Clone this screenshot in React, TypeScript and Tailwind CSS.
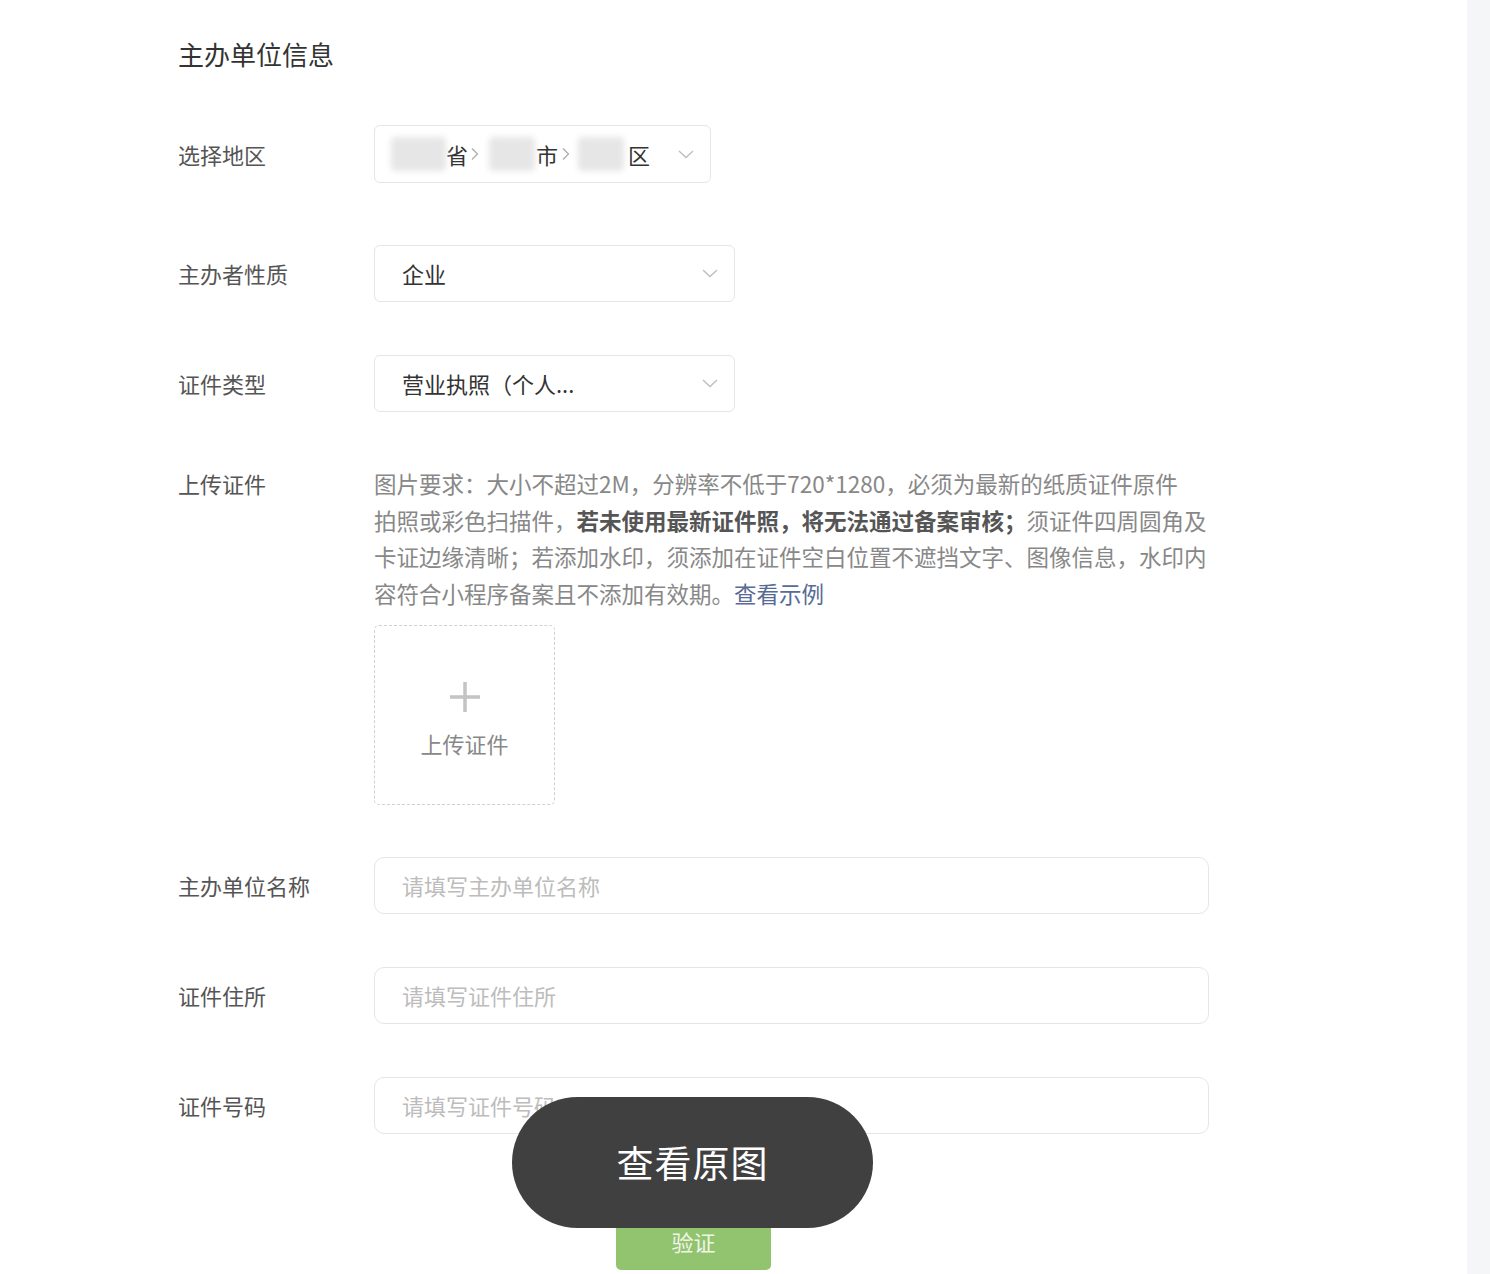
import type { ReactNode } from 'react'

const font = { fontFamily: '"Noto Sans CJK SC", "Noto Sans", sans-serif' }

function ChevronDown() {
  return (
    <svg width="16" height="9" viewBox="0 0 16 9" fill="none" className="shrink-0">
      <path d="M1 1 L8 7.5 L15 1" stroke="#bdbdbd" strokeWidth="1.3" />
    </svg>
  )
}

function Crumb() {
  return (
    <svg width="8" height="14" viewBox="0 0 8 14" fill="none" className="shrink-0">
      <path d="M1 1.5 L6.5 7 L1 12.5" stroke="#aaaaaa" strokeWidth="1.2" />
    </svg>
  )
}

function Blurred({ w }: { w: number }) {
  return <span className="h-[34px] bg-[#e6e6e6] blur-[3px] rounded-sm shrink-0" style={{ width: w }} />
}

function Row({ label, children, top = false }: { label: string; children: ReactNode; top?: boolean }) {
  return (
    <div className={top ? 'flex items-start' : 'flex items-center'}>
      <div className={top ? 'w-[196px] shrink-0 text-[22px] leading-[36.5px] text-[#555]' : 'w-[196px] shrink-0 text-[22px] text-[#555]'}>
        {label}
      </div>
      {children}
    </div>
  )
}

function Select({ value, width }: { value: string; width: string }) {
  return (
    <div className={`${width} h-[57px] flex items-center justify-between pl-[27px] pr-[16px] border border-[#e6e6e6] rounded-[6px] bg-white`}>
      <span className="text-[22px] text-[#333]">{value}</span>
      <ChevronDown />
    </div>
  )
}

function Input({ placeholder }: { placeholder: string }) {
  return (
    <div className="w-[835px] h-[57px] flex items-center pl-[27px] border border-[#e6e6e6] rounded-[10px] bg-white">
      <span className="text-[22px] text-[#bcbcbc]">{placeholder}</span>
    </div>
  )
}

export default function App() {
  return (
    <div className="relative flex w-full h-[1274px] overflow-hidden bg-white" style={font}>
      <main className="flex-1 pl-[178px] pt-[36px]">
        <div className="w-[1031px] flex flex-col">
          <h2 className="text-[26px] leading-[36px] text-[#333]">主办单位信息</h2>

          <div className="mt-[53px]">
            <Row label="选择地区">
              <div className="w-[337px] h-[58px] flex items-center pl-[16px] pr-[16px] border border-[#e6e6e6] rounded-[6px]">
                <Blurred w={55} />
                <span className="text-[22px] text-[#333]">省</span>
                <span className="ml-[3px] mr-[10px]"><Crumb /></span>
                <Blurred w={46} />
                <span className="ml-px text-[22px] text-[#333]">市</span>
                <span className="ml-[4px] mr-[8px]"><Crumb /></span>
                <Blurred w={46} />
                <span className="ml-[4px] text-[22px] text-[#333]">区</span>
                <span className="ml-auto"><ChevronDown /></span>
              </div>
            </Row>
          </div>

          <div className="mt-[62px]">
            <Row label="主办者性质">
              <Select value="企业" width="w-[361px]" />
            </Row>
          </div>

          <div className="mt-[53px]">
            <Row label="证件类型">
              <Select value="营业执照（个人..." width="w-[361px]" />
            </Row>
          </div>

          <div className="mt-[53px]">
            <Row label="上传证件" top>
              <div className="flex flex-col">
                <p className="w-[840px] text-[22.5px] leading-[36.5px] text-[#888]">
                  图片要求：大小不超过2M，分辨率不低于720*1280，必须为最新的纸质证件原件<br />
                  拍照或彩色扫描件，<b className="font-bold text-[#555]">若未使用最新证件照，将无法通过备案审核；</b>须证件四周圆角及<br />
                  卡证边缘清晰；若添加水印，须添加在证件空白位置不遮挡文字、图像信息，水印内<br />
                  容符合小程序备案且不添加有效期。<span className="text-[#576b95]">查看示例</span>
                </p>
                <div className="mt-[14px] w-[181px] h-[180px] flex flex-col items-center pt-[55px] border border-dashed border-[#d0d0d0] rounded-[5px]">
                  <svg width="32" height="32" viewBox="0 0 32 32">
                    <path d="M16 1 V31 M1 16 H31" stroke="#c4c4c4" strokeWidth="3.5" />
                  </svg>
                  <span className="mt-[14px] text-[22px] text-[#888]">上传证件</span>
                </div>
              </div>
            </Row>
          </div>

          <div className="mt-[52px]">
            <Row label="主办单位名称">
              <Input placeholder="请填写主办单位名称" />
            </Row>
          </div>

          <div className="mt-[53px]">
            <Row label="证件住所">
              <Input placeholder="请填写证件住所" />
            </Row>
          </div>

          <div className="mt-[53px]">
            <Row label="证件号码">
              <Input placeholder="请填写证件号码" />
            </Row>
          </div>

          <button className="mt-[78px] mx-auto w-[155px] h-[58px] rounded-[5px] bg-[#92c36e] text-[22px] text-[#eef6e8]">
            验证
          </button>
        </div>
      </main>

      <aside className="w-[23px] shrink-0 bg-[#f5f6f8]" />

      {/* 查看原图 overlay */}
      <div className="absolute left-[512px] top-[1097px] w-[361px] h-[131px] rounded-full bg-[#404040] flex items-center justify-center">
        <span className="text-[37px] text-white tracking-[1px]">查看原图</span>
      </div>
    </div>
  )
}
